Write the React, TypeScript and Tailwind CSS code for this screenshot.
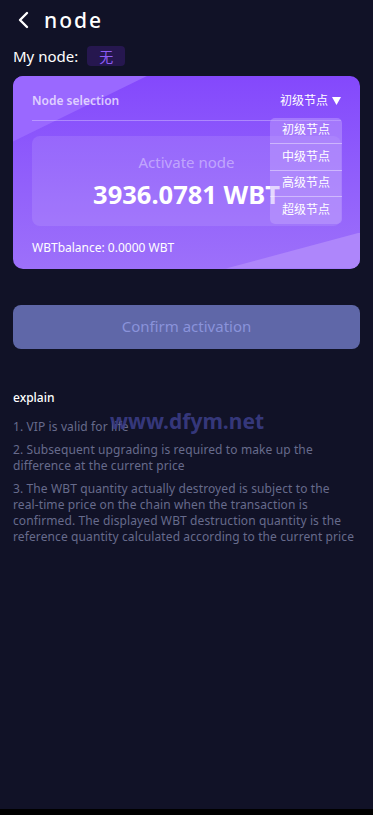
const font = { fontFamily: '"Noto Sans", "Noto Sans CJK SC", sans-serif' }

const levels = ['初级节点', '中级节点', '高级节点', '超级节点']

const notes = [
  '1. VIP is valid for life',
  '2. Subsequent upgrading is required to make up the difference at the current price',
  '3. The WBT quantity actually destroyed is subject to the real-time price on the chain when the transaction is confirmed. The displayed WBT destruction quantity is the reference quantity calculated according to the current price',
]

export default function App() {
  return (
    <div className="flex h-[815px] w-[373px] flex-col bg-black" style={font}>
      <div className="relative flex-1 overflow-hidden bg-[#111227] px-[13px]">
        {/* header */}
        <div className="flex h-[40px] items-center">
          <svg width="14" height="18" viewBox="0 0 14 18" className="ml-[4px]">
            <path d="M10 2 L3 9 L10 16" fill="none" stroke="#fff" strokeWidth="2.4" strokeLinecap="round" strokeLinejoin="round" />
          </svg>
          <span className="ml-[13px] text-[21px] font-medium leading-none tracking-[2px] text-white">node</span>
        </div>

        <div className="mt-[5px] flex items-center gap-[9px]">
          <span className="text-[15px] text-white">My node:</span>
          <span className="flex h-[20px] w-[38px] items-center justify-center rounded-[4px] bg-[#26174f] text-[14px] text-[#8d5cf6]">无</span>
        </div>

        {/* card */}
        <div className="relative mt-[8px] h-[193px] overflow-hidden rounded-[10px] bg-gradient-to-b from-[#8448fc] to-[#9d70fa] px-[19px]">
          <div className="absolute left-0 top-0 h-[66px] w-[135px] bg-[#9a68ff] [clip-path:polygon(0_0,100%_0,0_100%)]" />
          <div className="absolute bottom-0 right-0 h-[36px] w-[134px] bg-[#ae86fb] [clip-path:polygon(100%_0,100%_100%,0_100%)]" />

          <div className="relative flex h-[45px] items-center justify-between border-b border-white/30 pt-[6px]">
            <span className="text-[12px] font-semibold text-white/70">Node selection</span>
            <span className="flex items-center gap-[4px] text-[12px] text-white">
              初级节点
              <svg width="9" height="8" viewBox="0 0 9 8">
                <path d="M0 0 H9 L4.5 8 Z" fill="#fff" />
              </svg>
            </span>
          </div>

          <div className="relative mt-[15px] flex h-[90px] flex-col items-center rounded-[8px] bg-white/10 pt-[16px]">
            <span className="text-[15px] leading-[20px] text-white/40">Activate node</span>
            <span className="mt-[6px] text-[25.5px] font-bold leading-[32px] text-white">3936.0781 WBT</span>
          </div>

          <div className="relative mt-[13px] text-[12px] text-white">WBTbalance: 0.0000 WBT</div>

          <div className="absolute right-[18px] top-[42px] w-[72px] overflow-hidden rounded-[5px] bg-[#c3a6fd]/45">
            {levels.map((l, i) => (
              <div
                key={l}
                className={`flex h-[26.5px] items-center justify-center text-[12px] text-white ${i < levels.length - 1 ? 'border-b border-white/40' : ''}`}
              >
                {l}
              </div>
            ))}
          </div>
        </div>

        {/* confirm */}
        <button className="mt-[36px] flex h-[44px] w-full items-center justify-center rounded-[8px] bg-[#5f67a8] text-[15px] text-[#8a93db]">
          Confirm activation
        </button>

        {/* explain */}
        <div className="mt-[40px] text-[12px] font-medium text-white">explain</div>
        <div className="mt-[12px] flex w-[343px] flex-col gap-[7px]">
          {notes.map((n) => (
            <p key={n} className="text-[12px] leading-[16px] tracking-[0.11px] text-[#676b8c]">
              {n}
            </p>
          ))}
        </div>

        <div className="pointer-events-none absolute left-[110px] top-[406px] text-[21px] font-bold text-[#3b3d86]/90">
          www.dfym.net
        </div>
      </div>
      <div className="h-[6px] bg-black" />
    </div>
  )
}
